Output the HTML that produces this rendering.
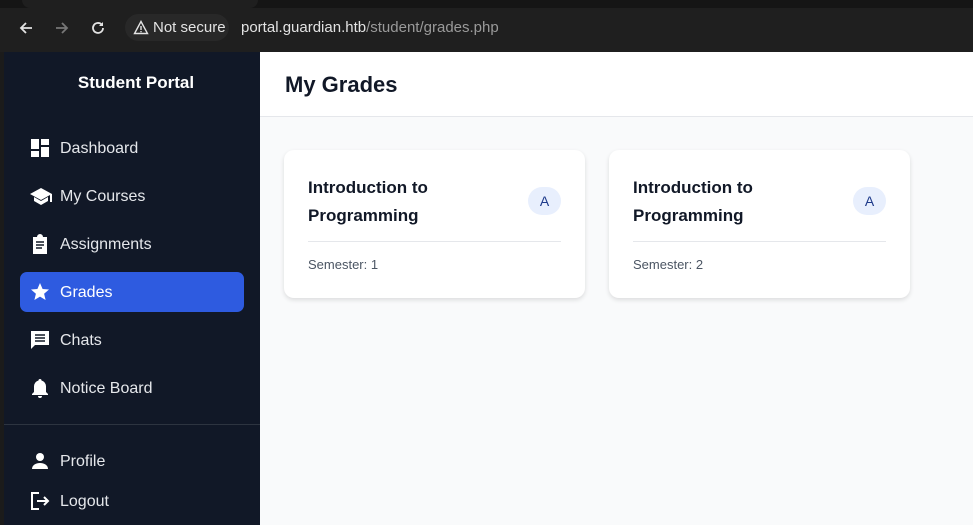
<!DOCTYPE html>
<html><head><style>
*{margin:0;padding:0;box-sizing:border-box}
body{width:973px;height:525px;overflow:hidden;font-family:"Liberation Sans",sans-serif;background:#f9fafb;position:relative}
.top{position:absolute;left:0;top:0;width:973px;height:52px;background:#1f1f1f}
.tab{position:absolute;left:0;top:0;width:973px;height:8px;background:#151515}
.tab2{position:absolute;left:22px;top:0;width:236px;height:8px;background:#1f1f1f;border-radius:0 0 8px 8px}
.omni{position:absolute;left:125px;top:14px;width:104px;height:27px;border-radius:14px;background:#282828}
.t{position:absolute;color:#e3e3e3;font-size:15px}
.side{position:absolute;left:0;top:52px;width:260px;height:473px;background:#111827;border-left:4px solid #1b1b1b}
.brand{position:absolute;left:6px;width:260px;top:73px;text-align:center;color:#fff;font-weight:bold;font-size:17px}
.item{position:absolute;left:20px;width:224px;height:40px;color:#e5e7eb;font-size:16px;line-height:42px;padding-left:40px;border-radius:7px}
.item svg{position:absolute;left:10px;top:10px}
.act{background:#2e5be0;color:#fff}
.hr{position:absolute;left:4px;top:424px;width:256px;height:1px;background:#2d3440}
.head{position:absolute;left:260px;top:52px;width:713px;height:65px;background:#fff;border-bottom:1px solid #e5e7eb}
.head h1{position:absolute;left:25px;top:20px;font-size:22px;color:#111827}
.card{position:absolute;top:150px;width:301px;height:148px;background:#fff;border-radius:10px;box-shadow:0 2px 5px rgba(0,0,0,.12)}
.card h2{position:absolute;left:24px;top:24px;font-size:17px;line-height:28px;color:#111827;width:180px}
.badge{position:absolute;left:244px;top:37px;width:33px;height:28px;border-radius:14px;background:#e8effd;color:#1e3a8a;font-size:14px;text-align:center;line-height:28px}
.line{position:absolute;left:24px;right:24px;top:91px;height:1px;background:#e5e7eb}
.sem{position:absolute;left:24px;top:107px;font-size:13px;color:#4b5563}
</style></head><body>
<div class="top"><div class="tab"></div><div class="tab2"></div><div class="omni"></div>
<svg style="position:absolute;left:18px;top:20px" width="16" height="16" viewBox="0 0 16 16"><path d="M14 8H3M8 3L3 8l5 5" stroke="#e3e3e3" stroke-width="1.8" fill="none"/></svg>
<svg style="position:absolute;left:54px;top:20px" width="16" height="16" viewBox="0 0 16 16"><path d="M2 8h11M8 3l5 5-5 5" stroke="#777" stroke-width="1.8" fill="none"/></svg>
<svg style="position:absolute;left:90px;top:20px" width="16" height="16" viewBox="0 0 16 16"><path d="M13 8a5 5 0 1 1-1.5-3.6" stroke="#e3e3e3" stroke-width="1.8" fill="none"/><path d="M13 2v4H9z" fill="#e3e3e3"/></svg>
<svg style="position:absolute;left:133px;top:20px" width="16" height="15" viewBox="0 0 16 15"><path d="M8 1.5L1.5 13.5h13z" stroke="#e3e3e3" stroke-width="1.4" fill="none"/><path d="M8 6v4M8 11v1.3" stroke="#e3e3e3" stroke-width="1.4"/></svg>
<div class="t" style="left:153px;top:19px">Not secure</div>
<div class="t" style="left:241px;top:19px">portal.guardian.htb<span style="color:#9a9a9a">/student/grades.php</span></div>
</div>
<div class="side"></div>
<div class="brand">Student Portal</div>
<div class="item" style="top:128px"><svg width="20" height="20" viewBox="0 0 20 20" fill="#fff"><rect x="1" y="1" width="8" height="10"/><rect x="11" y="1" width="8" height="6"/><rect x="1" y="13" width="8" height="6"/><rect x="11" y="9" width="8" height="10"/></svg>Dashboard</div>
<div class="item" style="top:176px"><svg width="22" height="20" viewBox="0 0 22 20" fill="#fff"><path d="M11 2L0 8l11 6 9-5v7h2V8z"/><path d="M4 11v4l7 4 7-4v-4l-7 4z"/></svg>My Courses</div>
<div class="item" style="top:224px"><svg width="20" height="20" viewBox="0 0 20 20" fill="#fff"><path d="M3 3h4a3 3 0 0 1 6 0h4v17H3z"/><path d="M6 8h8M6 11h8M6 14h6" stroke="#111827" stroke-width="1.6"/></svg>Assignments</div>
<div class="item act" style="top:272px"><svg width="20" height="20" viewBox="0 0 20 20" fill="#fff"><path d="M10 1l2.6 6 6.4.5-4.9 4.2 1.5 6.3L10 14.6 4.4 18l1.5-6.3L1 7.5 7.4 7z"/></svg>Grades</div>
<div class="item" style="top:320px"><svg width="20" height="20" viewBox="0 0 20 20" fill="#fff"><path d="M1 1h18v14H5l-4 4z"/><path d="M5 5h10M5 8h10M5 11h10" stroke="#111827" stroke-width="1.6"/></svg>Chats</div>
<div class="item" style="top:368px"><svg width="20" height="20" viewBox="0 0 20 20" fill="#fff"><path d="M10 1a1.5 1.5 0 0 1 1.5 1.5 6 6 0 0 1 4.5 6V14l2 2v1H2v-1l2-2V8.5a6 6 0 0 1 4.5-6A1.5 1.5 0 0 1 10 1zM8 18h4a2 2 0 0 1-4 0z"/></svg>Notice Board</div>
<div class="hr"></div>
<div class="item" style="top:441px"><svg width="20" height="20" viewBox="0 0 20 20" fill="#fff"><circle cx="10" cy="6" r="4"/><path d="M2 18c0-4 4-6 8-6s8 2 8 6z"/></svg>Profile</div>
<div class="item" style="top:481px"><svg width="20" height="20" viewBox="0 0 20 20" fill="none" stroke="#fff" stroke-width="2"><path d="M9 2H2v16h7M7 10h11M14 6l4 4-4 4"/></svg>Logout</div>
<div class="head"><h1>My Grades</h1></div>
<div class="card" style="left:284px"><h2>Introduction to Programming</h2><div class="badge">A</div><div class="line"></div><div class="sem">Semester: 1</div></div>
<div class="card" style="left:609px"><h2>Introduction to Programming</h2><div class="badge">A</div><div class="line"></div><div class="sem">Semester: 2</div></div>
</body></html>
